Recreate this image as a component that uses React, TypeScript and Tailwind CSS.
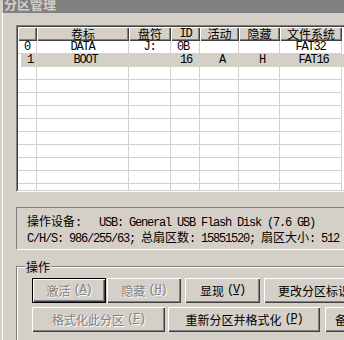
import React from "react";

const CJK = /([\u3000-\u9fff\uff00-\uffef]+)/;

// split mixed text so Latin uses a half-width mono face and CJK keeps full width
function mix(s: string) {
  return s.split(CJK).map((part, i) =>
    CJK.test(part) ? (
      <span key={i} className="tracking-normal [font-family:'Noto_Sans_CJK_SC',sans-serif]">
        {part}
      </span>
    ) : (
      <span key={i}>{part}</span>
    )
  );
}

const cols = [
  { w: "w-[19px]", label: "", align: "justify-start pl-[6px]" },
  { w: "w-[92px]", label: "卷标", align: "justify-center" },
  { w: "w-[42px]", label: "盘符", align: "justify-center" },
  { w: "w-[29px]", label: "ID", align: "justify-start pl-[6px]" },
  { w: "w-[39px]", label: "活动", align: "justify-center" },
  { w: "w-[41px]", label: "隐藏", align: "justify-center" },
  { w: "w-[62px]", label: "文件系统", align: "justify-center" },
];

const rows: string[][] = [
  ["0", "DATA", "J:", "0B", "", "", "FAT32"],
  ["1", "BOOT", "", "16", "A", "H", "FAT16"],
  ...Array.from({ length: 10 }, () => ["", "", "", "", "", "", ""]),
];

function Btn({
  w,
  text,
  key2,
  disabled,
  def,
  className = "",
}: {
  w: string;
  text: string;
  key2?: string;
  disabled?: boolean;
  def?: boolean;
  className?: string;
}) {
  return (
    <div className={`shrink-0 h-[25px] ${w} ${def ? "border border-black" : ""} ${className}`}>
      <div
        className={`h-full w-full bg-[#d4d0c8] flex items-center justify-center whitespace-pre shadow-[inset_1px_1px_#fff,inset_-1px_-1px_#404040,inset_-2px_-2px_#808080] ${
          disabled ? "text-[#808080] [text-shadow:1px_1px_#fff]" : "text-black"
        }`}
      >
        {mix(text)}
        {key2 && (
          <span className="ml-[3px]">
            (<span className="underline">{key2}</span>)
          </span>
        )}
      </div>
    </div>
  );
}

export default function App() {
  return (
    <div className="w-[344px] h-[340px] overflow-hidden bg-[#d4d0c8] text-[12px] leading-[13px] tracking-[-1.2px] text-black [font-family:'Liberation_Mono','Noto_Sans_CJK_SC',monospace]">
      <div className="h-[13px] bg-[#808080] overflow-hidden border-l-[3px] border-l-[#d4d0c8]">
        <div className="-mt-[4px] pl-[1px] text-[13px] leading-[15px] font-bold tracking-normal text-[#d4d0c8] [font-family:'Noto_Sans_CJK_SC',sans-serif]">
          分区管理
        </div>
      </div>
      <div className="flex h-[327px]">
        <div className="w-[4px] shrink-0 border-l border-l-[#d4d0c8] bg-[#d4d0c8]">
          <div className="ml-[1px] h-full w-px bg-white" />
        </div>
        <div className="flex-1 pl-[12px] pt-[12px]">
          {/* list view */}
          <div className="h-[167px] w-[330px] border border-t-[#808080] border-l-[#808080] border-b-white border-r-white">
            <div className="h-full w-full overflow-hidden bg-white border border-t-[#404040] border-l-[#404040] border-b-[#d4d0c8] border-r-[#d4d0c8]">
              <div className="flex h-[14px] leading-[12px]">
                {cols.map((c, i) => (
                  <div
                    key={i}
                    className={`${c.w} shrink-0 h-[14px] flex items-center justify-center bg-[#d4d0c8] shadow-[inset_1px_1px_#fff,inset_-1px_-1px_#404040,inset_-2px_-2px_#808080]`}
                  >
                    {mix(c.label)}
                  </div>
                ))}
              </div>
              {rows.map((r, ri) => (
                <div key={ri} className={`flex h-[13px] ${ri === 1 ? "bg-[#d4d0c8] border-l-[3px] border-l-white" : ""}`}>
                  {r.map((v, ci) => (
                    <div
                      key={ci}
                      className={`${cols[ci].w} ${ri === 1 && ci === 0 ? "w-[16px] pl-[3px]" : ""} shrink-0 flex items-center ${cols[ci].align} border-r border-b border-[#d4d0c8]`}
                    >
                      {v}
                    </div>
                  ))}
                </div>
              ))}
            </div>
          </div>

          {/* device info */}
          <div className="mt-[15px] h-[43px] w-[340px] border border-t-[#808080] border-l-[#808080] border-b-white border-r-white pl-[10px] pt-[6px] whitespace-pre leading-[14px]">
            <div>{mix("操作设备:   USB: General USB Flash Disk (7.6 GB)")}</div>
            <div>{mix("C/H/S: 986/255/63; 总扇区数: 15851520; 扇区大小: 512")}</div>
          </div>

          {/* operations group */}
          <div className="relative mt-[16px] w-[360px] h-[90px] border border-[#808080] shadow-[inset_1px_1px_#fff,1px_1px_#fff] pl-[15px] pt-[11px]">
            <div className="absolute left-[8px] -top-[7px] px-[1px] bg-[#d4d0c8] tracking-normal [font-family:'Noto_Sans_CJK_SC',sans-serif]">
              操作
            </div>
            <div className="flex">
              <Btn w="w-[74px]" text="激活" key2="A" disabled def />
              <Btn w="w-[74px]" text="隐藏" key2="H" disabled className="ml-[1px]" />
              <Btn w="w-[75px]" text="显现" key2="V" className="ml-[4px]" />
              <Btn w="w-[100px]" text="更改分区标识" className="ml-[4px]" />
            </div>
            <div className="flex mt-[4px]">
              <Btn w="w-[133px]" text="格式化此分区" key2="F" disabled />
              <Btn w="w-[152px]" text="重新分区并格式化" key2="P" className="ml-[3px]" />
              <Btn w="w-[80px]" text="备份分区表" className="ml-[5px]" />
            </div>
          </div>
        </div>
      </div>
    </div>
  );
}
